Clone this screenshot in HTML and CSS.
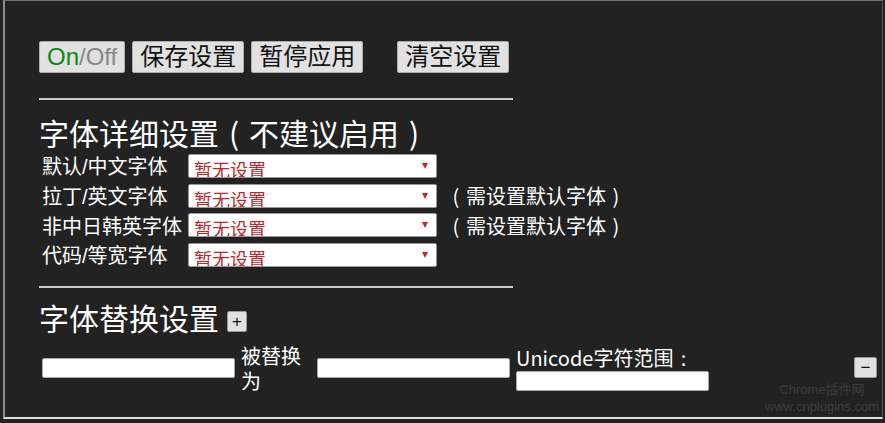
FILE: index.html
```html
<!DOCTYPE html>
<html lang="zh-CN">
<head>
  <meta charset="UTF-8"/>
  <title>字体设置</title>
  <link rel="stylesheet" href="styles.css">
</head>
<body>
  <div class="frame">
    <div class="toolbar">
      <button class="btn"><span class="on">On</span>/Off</button>
      <button class="btn">保存设置</button>
      <button class="btn">暂停应用</button>
      <button class="btn btn-clear">清空设置</button>
    </div>

    <hr>

    <h2>字体详细设置<span class="par">(</span>不建议启用<span class="par">)</span></h2>
    <div class="font-grid">
      <label>默认/中文字体</label>
      <span class="pick"><select><option>暂无设置</option></select></span>
      <span></span>

      <label>拉丁/英文字体</label>
      <span class="pick"><select><option>暂无设置</option></select></span>
      <span class="hint"><span class="par">(</span>需设置默认字体<span class="par">)</span></span>

      <label>非中日韩英字体</label>
      <span class="pick"><select><option>暂无设置</option></select></span>
      <span class="hint"><span class="par">(</span>需设置默认字体<span class="par">)</span></span>

      <label>代码/等宽字体</label>
      <span class="pick"><select><option>暂无设置</option></select></span>
      <span></span>
    </div>

    <hr>

    <h2>字体替换设置<button class="mini">+</button></h2>
    <div class="replace-row">
      <input type="text">
      <span class="word">被替换为</span>
      <input type="text">
      <div class="range">
        <span>Unicode字符范围<span class="par">:</span></span>
        <input type="text">
      </div>
      <button class="mini minus">−</button>
    </div>

    <div class="mark">Chrome插件网<br>www.cnplugins.com</div>
  </div>
</body>
</html>
```

FILE: styles.css
```css
* {
  box-sizing: border-box;
}
body {
  margin: 0;
  background: #222;
  color: #fff;
  font-family: "Liberation Sans", "Noto Sans CJK SC", sans-serif;
}
.frame {
  position: relative;
  margin-left: 3px;
  width: 880px;
  height: 419px;
  border-left: 2px solid #8c8c8c;
  border-top: 1px solid #707070;
  border-bottom: 2px solid #ddd;
  border-right: 1px solid #555;
  padding: 40px 2px 0 34px;
}
.toolbar {
  display: flex;
  gap: 7px;
}
.btn {
  height: 32px;
  padding: 0 7px;
  background: #e1e1e1;
  border: 1px solid #adadad;
  border-radius: 2px;
  color: #111;
  font-family: "Liberation Sans", "Noto Sans CJK SC", sans-serif;
  font-size: 24px;
  line-height: 28px;
}
.btn:first-child {
  color: #888;
}
.btn .on {
  color: #0a8a0a;
}
.btn-clear {
  margin-left: 27px;
}
hr {
  width: 474px;
  margin: 25px 0 0;
  border: none;
  border-top: 2px solid #ccc;
}
h2 {
  margin: 13px 0 0;
  font-size: 30px;
  font-weight: normal;
  line-height: 38px;
  font-family: "Noto Sans CJK SC", sans-serif;
}
.par {
  display: inline-block;
  width: 1em;
  text-align: center;
  font-family: "Noto Sans CJK SC", sans-serif;
}
.font-grid {
  display: grid;
  grid-template-columns: 146px 249px auto;
  grid-auto-rows: 29.7px;
  align-items: center;
  margin-left: 3px;
  font-size: 20px;
}
.font-grid label {
  white-space: nowrap;
}
.pick {
  position: relative;
  display: block;
  height: 24px;
}
.pick::after {
  content: "";
  position: absolute;
  right: 9px;
  top: 9px;
  border-left: 3px solid transparent;
  border-right: 3px solid transparent;
  border-top: 6px solid #c0272d;
}
select {
  appearance: none;
  width: 249px;
  height: 24px;
  padding: 4px 0 0 5px;
  background: #fff;
  border: 1px solid #999;
  border-radius: 2px;
  color: #c0272d;
  font-family: "Noto Sans CJK SC", sans-serif;
  font-size: 18px;
  line-height: 20px;
}
.hint {
  padding-left: 9px;
  white-space: nowrap;
}
.font-grid + hr {
  margin-top: 16px;
}
.font-grid + hr + h2 {
  margin-top: 10px;
}
.mini {
  width: 20px;
  height: 21px;
  margin-left: 8px;
  padding: 0;
  vertical-align: 3px;
  background: #e1e1e1;
  border: 1px solid #999;
  border-radius: 2px;
  color: #111;
  font-family: "Liberation Sans", sans-serif;
  font-size: 17px;
  line-height: 18px;
}
.replace-row {
  display: flex;
  align-items: center;
  gap: 6px;
  margin: 7px 0 0 3px;
  font-size: 20px;
  font-family: "Noto Sans CJK SC", sans-serif;
}
input {
  width: 193px;
  height: 20px;
  background: #fff;
  border: 1px solid #aaa;
  border-radius: 2px;
}
.word {
  width: 70px;
  line-height: 25px;
}
.range {
  display: flex;
  flex-direction: column;
  align-items: flex-start;
  line-height: 26px;
}
.minus {
  width: 23px;
  margin-left: auto;
  margin-right: 3px;
}
.mark {
  position: absolute;
  right: 3px;
  bottom: 2px;
  color: #3c3c3c;
  font-size: 13px;
  line-height: 17px;
  text-align: center;
}
```
